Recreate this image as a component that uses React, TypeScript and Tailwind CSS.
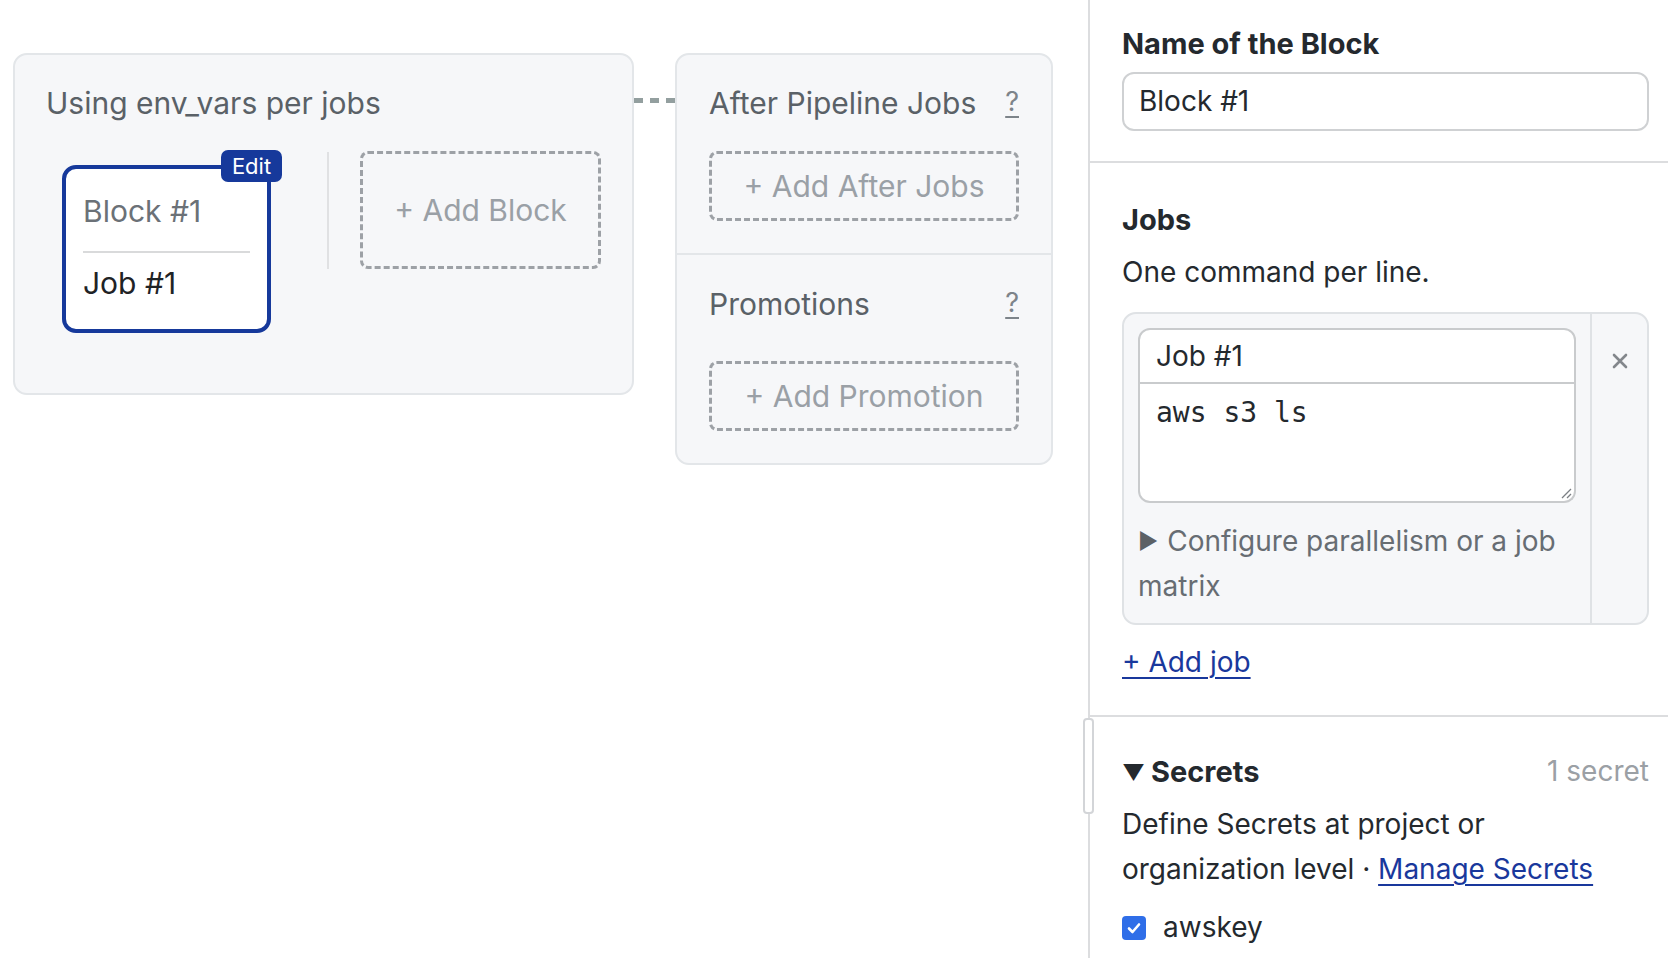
import React from "react"

const DashedButton: React.FC<{ label: string; className?: string }> = ({ label, className }) => (
  <div
    className={`flex items-center justify-center rounded-[8px] border-[3px] border-dashed border-[#9da1a6] text-[#9aa0a6] ${className ?? ""}`}
  >
    {label}
  </div>
)

const HelpMark = () => (
  <span className="-mt-[4px] text-[27px] leading-none text-[#7d848a] underline underline-offset-[5px] decoration-[2px]">?</span>
)

const Canvas = () => {
  return (
    <div className="flex w-[1088px] shrink-0 items-start pl-[13px] pt-[53px] text-[30px]">
      {/* pipeline block */}
      <div className="h-[342px] w-[621px] rounded-[14px] border-2 border-[#e3e6e9] bg-[#f6f7f9] pl-[31px] pt-[26px]">
        <div className="text-[#5a6167]">Using env_vars per jobs</div>
        <div className="mt-[24px] flex items-start pl-[16px]">
          <div className="relative mt-[15px] w-[209px] rounded-[14px] border-4 border-[#16399b] bg-white px-[17px] pb-[23px] pt-[20px]">
            <div className="text-[#6b7177]">Block #1</div>
            <div className="mb-[8px] mt-[17px] h-[2px] bg-[#d9dadb]" />
            <div className="text-[#1f2326]">Job #1</div>
            <div className="absolute -right-[15px] -top-[19px] flex h-[32px] w-[61px] items-center justify-center rounded-[7px] bg-[#16399b] text-[22px] leading-none text-white">
              Edit
            </div>
          </div>
          <div className="ml-[56px] mt-[2px] h-[117px] w-[2px] bg-[#e0e1e3]" />
          <DashedButton label="+ Add Block" className="ml-[31px] mt-[1px] h-[118px] w-[241px]" />
        </div>
      </div>

      {/* connector */}
      <div className="mt-[45px] h-[5px] w-[41px] bg-[repeating-linear-gradient(90deg,#939f9f_0_9px,transparent_9px_16px)]" />

      {/* after jobs + promotions */}
      <div className="h-[412px] w-[378px] rounded-[14px] border-2 border-[#e3e6e9] bg-[#f6f7f9]">
        <div className="border-b-2 border-[#e3e6e9] px-[32px] pb-[32px] pt-[26px]">
          <div className="flex items-center justify-between text-[#5a6167]">
            <span>After Pipeline Jobs</span>
            <HelpMark />
          </div>
          <DashedButton label="+ Add After Jobs" className="mt-[25px] h-[70px]" />
        </div>
        <div className="px-[32px] pt-[27px]">
          <div className="flex items-center justify-between text-[#5a6167]">
            <span>Promotions</span>
            <HelpMark />
          </div>
          <DashedButton label="+ Add Promotion" className="mt-[34px] h-[70px]" />
        </div>
      </div>
    </div>
  )
}

const Panel = () => {
  return (
    <div className="relative h-[958px] flex-1 border-l-2 border-[#dcdddf] text-[#24292e]">
      {/* resize handle */}
      <div className="absolute -left-[7px] top-[718px] h-[96px] w-[11px] rounded-[4px] border-2 border-[#d3d5d8] bg-white" />

      <div className="border-b-2 border-[#dcdddf] pb-[30px] pl-[32px] pr-[19px] pt-[21px]">
        <div className="text-[29px] font-bold">Name of the Block</div>
        <div className="mt-[6px] flex h-[59px] items-center rounded-[12px] border-2 border-[#cfd1d3] bg-white pl-[15px]">
          Block #1
        </div>
      </div>

      <div className="border-b-2 border-[#dcdddf] pb-[30px] pl-[32px] pr-[19px] pt-[34px]">
        <div className="text-[29px] font-bold">Jobs</div>
        <div className="mt-[8px]">One command per line.</div>
        <div className="mt-[17px] flex rounded-[14px] border-2 border-[#dfe2e5] bg-[#f6f7f9]">
          <div className="flex-1 pb-[14px] pl-[14px] pr-[14px] pt-[14px]">
            <div className="flex h-[56px] items-center rounded-t-[12px] border-2 border-[#c9cbcd] bg-white pl-[16px]">
              Job #1
            </div>
            <div className="relative h-[119px] rounded-b-[12px] border-2 border-t-0 border-[#c9cbcd] bg-white pl-[16px] pt-[6px] font-['DejaVu_Sans_Mono',monospace] text-[28px]">
              aws s3 ls
              <svg className="absolute bottom-[2px] right-[2px]" width="12" height="12" viewBox="0 0 12 12">
                <path d="M11 2 L2 11 M11 7 L7 11" stroke="#7b7f84" strokeWidth="1.3" />
              </svg>
            </div>
            <div className="mt-[16px] text-[#676d73]">
              <span className="mr-[9px] inline-block align-[2px] text-[22px] leading-none text-[#5c6166]">▶</span>
              Configure parallelism or a job
              <br />
              matrix
            </div>
          </div>
          <div className="flex w-[57px] justify-center border-l-2 border-[#dfe2e5] pt-[38px]">
            <svg width="18" height="18" viewBox="0 0 18 18">
              <path d="M3 3 L15 15 M15 3 L3 15" stroke="#83878c" strokeWidth="2.6" strokeLinecap="round" />
            </svg>
          </div>
        </div>
        <div className="mt-[15px]">
          <a className="text-[#19389c] underline decoration-[2px] underline-offset-[5px]">+ Add job</a>
        </div>
      </div>

      <div className="pl-[32px] pr-[19px] pt-[32px]">
        <div className="flex items-center justify-between">
          <div className="flex items-center text-[29px] font-bold">
            <span className="mr-[6px] text-[22px] leading-none">▼</span>
            Secrets
          </div>
          <span className="text-[#9ba0a5]">1 secret</span>
        </div>
        <div className="mt-[8px]">
          Define Secrets at project or
          <br />
          organization level ·{" "}
          <a className="text-[#19389c] underline decoration-[2px] underline-offset-[5px]">Manage Secrets</a>
        </div>
        <div className="mt-[13px] flex items-center">
          <span className="flex h-[24px] w-[24px] items-center justify-center rounded-[4px] bg-[#2f6ee8]">
            <svg width="16" height="16" viewBox="0 0 16 16">
              <path d="M3 8.5 L6.5 12 L13 4.5" stroke="white" strokeWidth="2.6" fill="none" strokeLinecap="round" strokeLinejoin="round" />
            </svg>
          </span>
          <span className="ml-[17px]">awskey</span>
        </div>
      </div>
    </div>
  )
}

export default function App() {
  return (
    <div className="flex h-[958px] w-[1668px] overflow-hidden bg-white font-['Inter',sans-serif] text-[28px] leading-[45px]">
      <Canvas />
      <Panel />
    </div>
  )
}
